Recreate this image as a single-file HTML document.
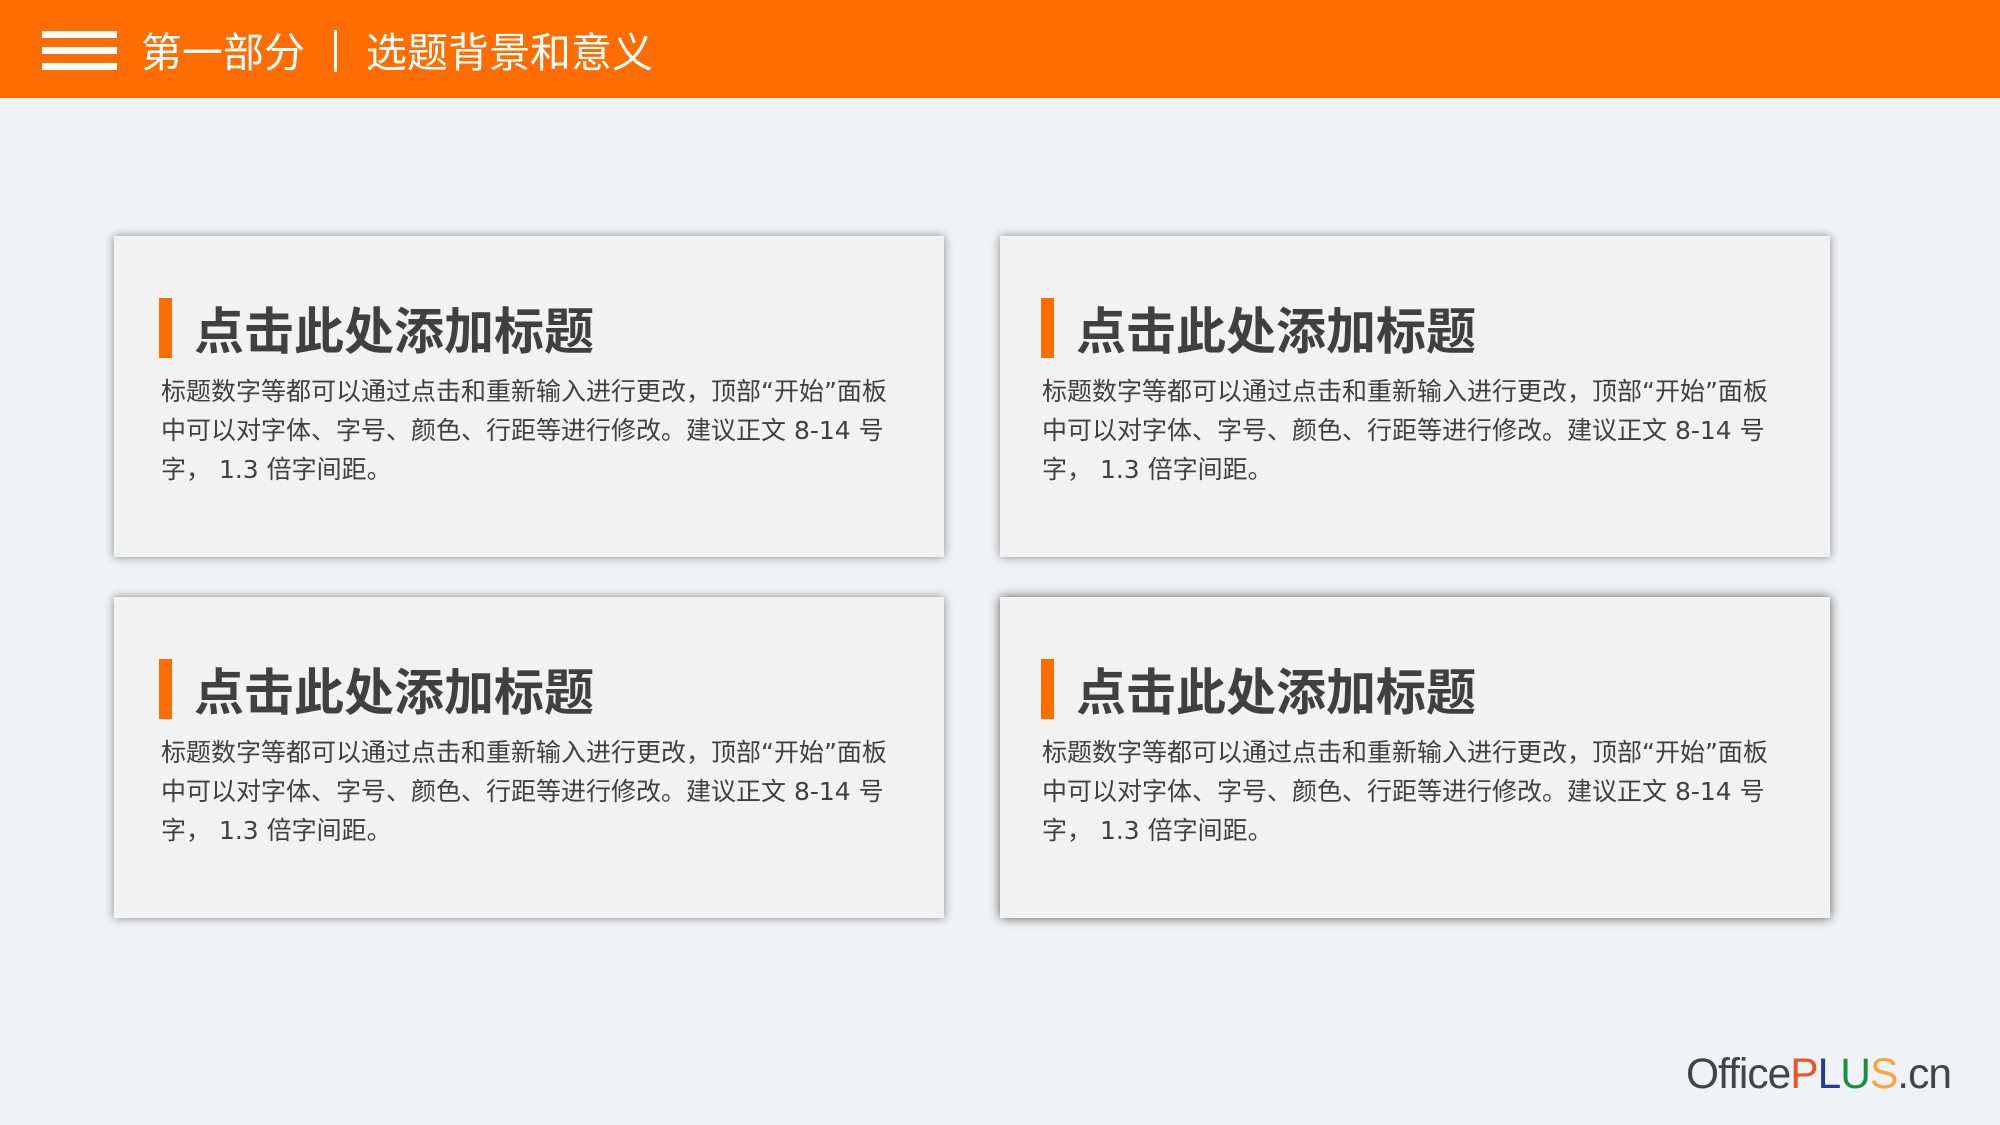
<!DOCTYPE html>
<html><head><meta charset="utf-8"><style>
*{margin:0;padding:0;box-sizing:border-box}
body{width:2000px;height:1125px;background:#f0f3f6;position:relative;overflow:hidden;font-family:"Liberation Sans","Noto Sans CJK SC",sans-serif}
.hdr{position:absolute;left:0;top:0;width:2000px;height:98px;background:#ff6d00}
.hb{position:absolute;left:42px;width:75px;height:7px;background:#fff}
.ht{position:absolute;top:28px;color:#fff;font-size:41px;line-height:50px;white-space:nowrap}
.card{position:absolute;width:830px;height:321px;background:#f2f2f2;box-shadow:0 0 9px rgba(0,0,0,.45)}
.card.dk{box-shadow:0 0 10px rgba(0,0,0,.65)}
.bar{position:absolute;left:45px;top:62px;width:13px;height:60px;background:#ff6d00}
.tt{position:absolute;left:80px;top:66px;font-size:50px;line-height:60px;font-weight:bold;color:#404040;white-space:nowrap}
.bd{position:absolute;left:47px;top:136px;font-family:"DejaVu Sans","Noto Sans CJK SC",sans-serif;font-size:25px;line-height:39px;color:#404040;white-space:nowrap}
.r .bar{left:41px}.r .tt{left:76px}.r .bd{left:42px}
.logo{position:absolute;left:1686px;top:1050px;font-size:42.5px;line-height:50px;color:#444;white-space:nowrap;letter-spacing:-1px}
</style></head><body>
<div class="hdr">
<div class="hb" style="top:31px"></div><div class="hb" style="top:47px"></div><div class="hb" style="top:63px"></div>
<div class="ht" style="left:141px">第一部分</div>
<div style="position:absolute;left:334px;top:30px;width:3px;height:42px;background:#fff"></div>
<div class="ht" style="left:366px">选题背景和意义</div>
</div>
<div class="card" style="left:114px;top:236px"><div class="bar"></div><div class="tt">点击此处添加标题</div><div class="bd">标题数字等都可以通过点击和重新输入进行更改，顶部“开始”面板<br>中可以对字体、字号、颜色、行距等进行修改。建议正文 8-14 号<br>字， 1.3 倍字间距。</div></div>
<div class="card r" style="left:1000px;top:236px"><div class="bar"></div><div class="tt">点击此处添加标题</div><div class="bd">标题数字等都可以通过点击和重新输入进行更改，顶部“开始”面板<br>中可以对字体、字号、颜色、行距等进行修改。建议正文 8-14 号<br>字， 1.3 倍字间距。</div></div>
<div class="card" style="left:114px;top:597px"><div class="bar"></div><div class="tt">点击此处添加标题</div><div class="bd">标题数字等都可以通过点击和重新输入进行更改，顶部“开始”面板<br>中可以对字体、字号、颜色、行距等进行修改。建议正文 8-14 号<br>字， 1.3 倍字间距。</div></div>
<div class="card r dk" style="left:1000px;top:597px"><div class="bar"></div><div class="tt">点击此处添加标题</div><div class="bd">标题数字等都可以通过点击和重新输入进行更改，顶部“开始”面板<br>中可以对字体、字号、颜色、行距等进行修改。建议正文 8-14 号<br>字， 1.3 倍字间距。</div></div>
<div class="logo">Office<span style="color:#e8562a">P</span><span style="color:#1f3d94">L</span><span style="color:#1e8c3e">U</span><span style="color:#f5a640">S</span>.cn</div>
</body></html>
